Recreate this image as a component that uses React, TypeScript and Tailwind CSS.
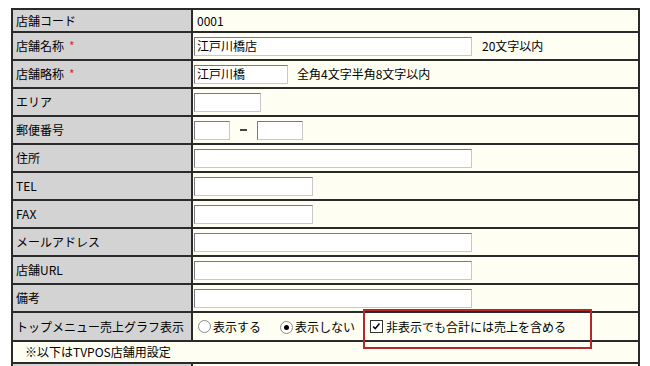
import React from 'react';

const jp = { fontFamily: '"Noto Sans CJK JP", "Noto Sans", sans-serif' };

function Box({ w }: { w: string }) {
  return <span className={`inline-block h-[19px] ${w} border border-t-[#7a7a7a] border-l-[#7a7a7a] border-r-[#c8c8c8] border-b-[#c8c8c8] bg-white align-middle`} />;
}

function TextBox({ w, value }: { w: string; value: string }) {
  return (
    <span className={`inline-flex h-[19px] ${w} items-center border border-t-[#7a7a7a] border-l-[#7a7a7a] border-r-[#c8c8c8] border-b-[#c8c8c8] bg-white pl-[2px] align-middle`}>
      {value}
    </span>
  );
}

function Radio({ checked }: { checked?: boolean }) {
  return (
    <span className="inline-flex h-[13px] w-[13px] items-center justify-center rounded-full border border-[#8a8a8a] bg-white">
      {checked && <span className="h-[5px] w-[5px] rounded-full bg-black" />}
    </span>
  );
}

function Required() {
  return <span className="ml-[5px] text-[#c8323c]">*</span>;
}

type Row = { label: React.ReactNode; cell: React.ReactNode; h: string };

export default function App() {
  const rows: Row[] = [
    { label: '店舗コード', cell: <span className="pl-[3px]">0001</span>, h: 'h-[23px]' },
    {
      label: <>店舗名称<Required /></>,
      cell: (
        <div className="flex items-center">
          <TextBox w="w-[278px]" value="江戸川橋店" />
          <span className="ml-[10px]">20文字以内</span>
        </div>
      ),
      h: 'h-[28px]',
    },
    {
      label: <>店舗略称<Required /></>,
      cell: (
        <div className="flex items-center">
          <TextBox w="w-[94px]" value="江戸川橋" />
          <span className="ml-[9px]">全角4文字半角8文字以内</span>
        </div>
      ),
      h: 'h-[28px]',
    },
    { label: 'エリア', cell: <Box w="w-[67px]" />, h: 'h-[28px]' },
    {
      label: '郵便番号',
      cell: (
        <div className="flex items-center">
          <Box w="w-[36px]" />
          <span className="mx-[10px] inline-block h-[2px] w-[7px] bg-[#444]" />
          <Box w="w-[46px]" />
        </div>
      ),
      h: 'h-[28px]',
    },
    { label: '住所', cell: <Box w="w-[278px]" />, h: 'h-[28px]' },
    { label: 'TEL', cell: <Box w="w-[119px]" />, h: 'h-[28px]' },
    { label: 'FAX', cell: <Box w="w-[119px]" />, h: 'h-[28px]' },
    { label: 'メールアドレス', cell: <Box w="w-[278px]" />, h: 'h-[28px]' },
    { label: '店舗URL', cell: <Box w="w-[278px]" />, h: 'h-[28px]' },
    { label: '備考', cell: <Box w="w-[278px]" />, h: 'h-[28px]' },
    {
      label: 'トップメニュー売上グラフ表示',
      cell: (
        <div className="ml-[4px] flex items-center">
          <Radio />
          <span className="ml-[2px]">表示する</span>
          <span className="ml-[19px]"><Radio checked /></span>
          <span className="ml-[2px]">表示しない</span>
          <span className="relative ml-[15px] flex items-center">
            <span className="relative inline-flex h-[13px] w-[13px] items-center justify-center border border-[#333] bg-white">
              <svg viewBox="0 0 13 13" className="h-[11px] w-[11px]">
                <path d="M2.5 6.5 L5 9 L10 3" fill="none" stroke="#000" strokeWidth="1.8" />
              </svg>
            </span>
            <span className="ml-[3px]">非表示でも合計には売上を含める</span>
          </span>
        </div>
      ),
      h: 'h-[29px]',
    },
  ];

  return (
    <div className="relative h-[366px] w-[650px] overflow-hidden bg-white pl-[11px] pt-[8px] text-[12px] leading-none text-black" style={jp}>
      <table className="w-[629px] border-collapse border-2 border-b-0 border-[#2a2a2a]">
        <tbody>
          {rows.map((r, i) => (
            <tr key={i} className={r.h}>
              <td className="w-[180px] border-b-2 border-r-2 border-[#2a2a2a] bg-[#d3d3d3] pl-[3px] align-middle">
                {r.label}
              </td>
              <td className="border-b-2 border-[#2a2a2a] bg-[#fefef2] pl-[1px] align-middle">{r.cell}</td>
            </tr>
          ))}
          <tr className="h-[22px]">
            <td colSpan={2} className="border-b-2 border-[#2a2a2a] bg-[#fefef2] pl-[12px] align-middle">
              ※以下はTVPOS店舗用設定
            </td>
          </tr>
          <tr className="h-[3px]">
            <td className="border-r-2 border-[#2a2a2a] bg-[#d3d3d3] p-0" />
            <td className="bg-[#fefef2] p-0" />
          </tr>
        </tbody>
      </table>
      <div className="absolute left-[363px] top-[309px] h-[40px] w-[229px] border-2 border-[#b4282a]" />
    </div>
  );
}
